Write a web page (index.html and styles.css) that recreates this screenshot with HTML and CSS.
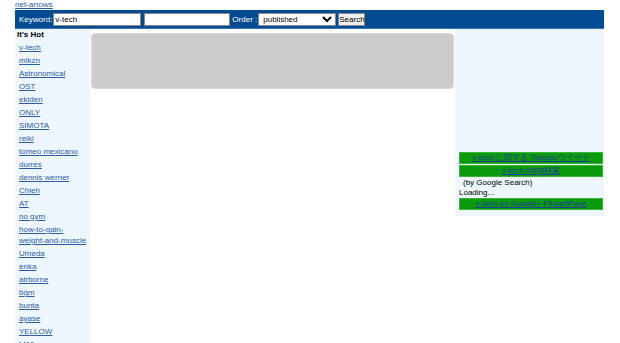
FILE: index.html
```html
<!DOCTYPE html>
<html>
<head>
<meta charset="utf-8">
<link rel="stylesheet" href="styles.css">
</head>
<body>
<div class="wrap">
  <div class="toplink"><a href="#">net-arrows</a></div>
  <form class="bar">
    <label class="lbl">Keyword:</label>
    <input class="txt kw" type="text" value="v-tech">
    <input class="txt kw2" type="text" value="">
    <label class="lbl ord">Order :</label>
    <select class="sel"><option>published</option></select>
    <button class="btn" type="button">Search</button>
  </form>
  <div class="cols">
    <div class="left">
      <div class="hot">It's Hot</div>
      <ul class="hotlist">
        <li><a href="#">v-tech</a></li>
        <li><a href="#">mikzn</a></li>
        <li><a href="#">Astronomical</a></li>
        <li><a href="#">OST</a></li>
        <li><a href="#">ekiden</a></li>
        <li><a href="#">ONLY</a></li>
        <li><a href="#">SIMOTA</a></li>
        <li><a href="#">reiki</a></li>
        <li><a href="#">tomeo mexicano</a></li>
        <li><a href="#">durres</a></li>
        <li><a href="#">dennis werner</a></li>
        <li><a href="#">Chieh</a></li>
        <li><a href="#">AT</a></li>
        <li><a href="#">no gym</a></li>
        <li><a href="#">how-to-gain-<span class="nw">weight-and-muscle</span></a></li>
        <li><a href="#">Umeda</a></li>
        <li><a href="#">enka</a></li>
        <li><a href="#">airborne</a></li>
        <li><a href="#">bgm</a></li>
        <li><a href="#">bunta</a></li>
        <li><a href="#">ayase</a></li>
        <li><a href="#">YELLOW</a></li>
        <li><a href="#">M10</a></li>
      </ul>
    </div>
    <div class="main">
      <div class="greybox"></div>
    </div>
    <div class="right">
      <div class="gbar"><a href="#">v-tech に関する Tweets/ツイート</a></div>
      <div class="gbar"><a href="#">v-tech WEB検索</a></div>
      <div class="note">(by Google Search)</div>
      <div class="loading">Loading...</div>
      <div class="gbar"><a href="#">v-tech on Google+ PlusedPage</a></div>
    </div>
  </div>
</div>
</body>
</html>
```
FILE: styles.css
```css
html, body {
  margin: 0;
  padding: 0;
  background: #ffffff;
  font-family: "Liberation Sans", Arial, sans-serif;
  font-size: 8px;
  color: #000;
}
a { color: #2c5ca6; }
.wrap {
  width: 589px;
  margin-left: 15px;
}
.toplink {
  height: 10px;
  line-height: 10px;
}
.bar {
  margin: 0;
  height: 18px;
  background: #004b91;
  border-bottom: 1px solid #3a74b4;
  display: flex;
  align-items: center;
  padding-left: 4px;
  box-sizing: content-box;
}
.lbl {
  color: #ffffff;
  margin-right: 1px;
}
.ord { margin-left: 2px; margin-right: 1px; }
.txt {
  box-sizing: border-box;
  height: 13px;
  border: 1px solid #8a8a8a;
  padding: 0 1px;
  font-family: "Liberation Sans", Arial, sans-serif;
  font-size: 8px;
  background: #fff;
  margin: 0;
}
.kw { width: 88px; margin-right: 3px; }
.kw2 { width: 86px; }
.sel {
  box-sizing: border-box;
  width: 78px;
  height: 13px;
  font-size: 8px;
  font-family: "Liberation Sans", Arial, sans-serif;
  padding: 0;
  margin: 0 2px 0 0;
  border: 1px solid #8a8a8a;
  background: #fff;
  border-radius: 0;
}
.btn {
  box-sizing: border-box;
  height: 13px;
  width: 27px;
  padding: 0;
  font-size: 8px;
  font-family: "Liberation Sans", Arial, sans-serif;
  background: #efefef;
  border: 1px solid #8a8a8a;
  border-radius: 1px;
  color: #000;
}
.cols {
  display: flex;
  align-items: flex-start;
}
.left {
  width: 75px;
  background: #eef7ff;
  min-height: 330px;
  padding-top: 1px;
}
.hot {
  font-weight: bold;
  padding-left: 2px;
  line-height: 10px;
  height: 12px;
}
.hotlist {
  list-style: none;
  margin: 0;
  padding: 0 0 0 4px;
}
.hotlist li {
  line-height: 11px;
  margin-bottom: 2px;
}
.nw { white-space: nowrap; }
.main {
  width: 365px;
  padding: 4px 1px 0 1px;
  box-sizing: border-box;
}
.greybox {
  height: 54px;
  background: #cccccc;
  border: 1px solid #dadada;
  border-radius: 4px;
}
.right {
  width: 149px;
  background: #eef7ff;
  padding: 123px 1px 6px 4px;
  box-sizing: border-box;
  height: 187px;
}
.gbar {
  background: #0a9a0a;
  border: 1px solid #36b536;
  height: 10px;
  line-height: 10px;
  text-align: center;
  margin-bottom: 1px;
}
.gbar a { color: #1f3d9e; }
.note {
  padding-left: 4px;
  line-height: 10px;
}
.loading {
  line-height: 9px;
  margin-bottom: 1px;
}
```
